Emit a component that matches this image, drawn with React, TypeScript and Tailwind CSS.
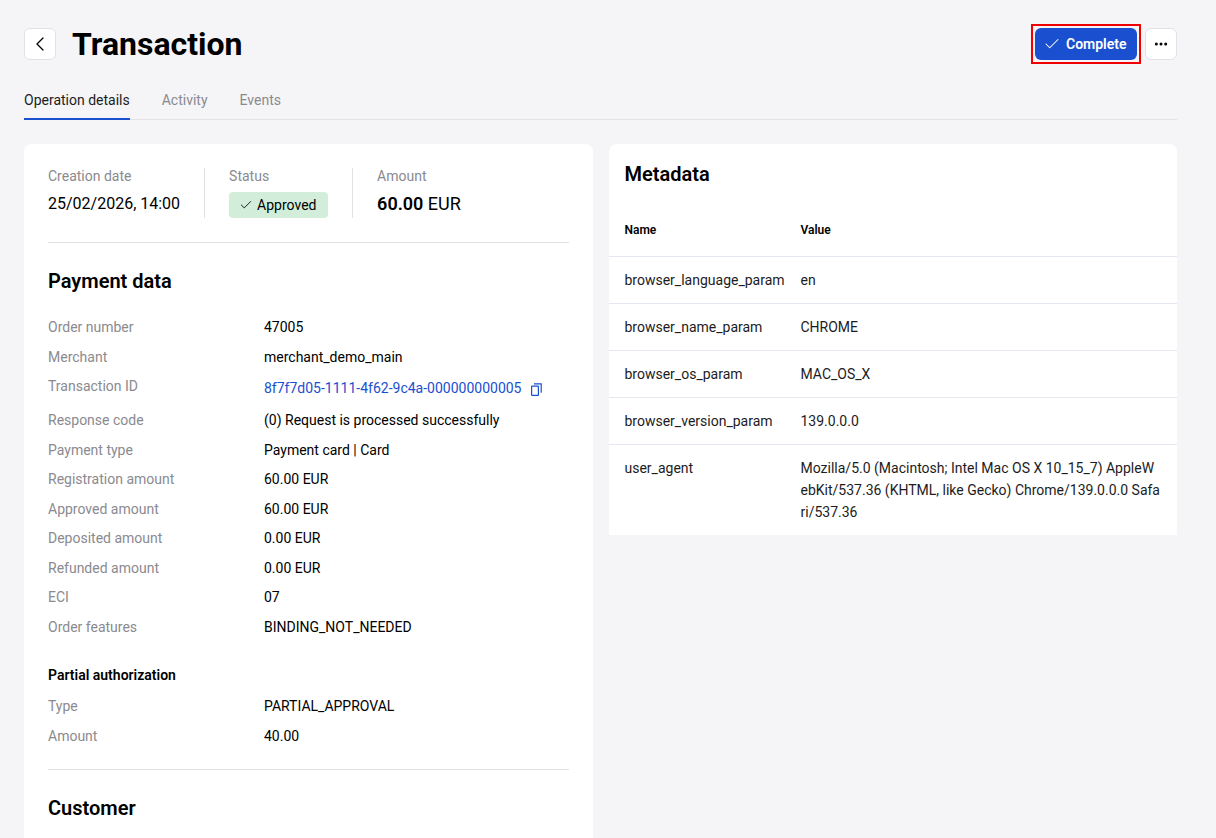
import { Check, ChevronLeft, MoreHorizontal } from 'lucide-react';

const paymentRows = [
  { label: 'Order number', value: '47005' },
  { label: 'Merchant', value: 'merchant_demo_main' },
  { label: 'Transaction ID', value: '8f7f7d05-1111-4f62-9c4a-000000000005', copy: true },
  { label: 'Response code', value: '(0) Request is processed successfully' },
  { label: 'Payment type', value: 'Payment card | Card' },
  { label: 'Registration amount', value: '60.00 EUR' },
  { label: 'Approved amount', value: '60.00 EUR' },
  { label: 'Deposited amount', value: '0.00 EUR' },
  { label: 'Refunded amount', value: '0.00 EUR' },
  { label: 'ECI', value: '07' },
  { label: 'Order features', value: 'BINDING_NOT_NEEDED' },
];

const partialRows = [
  { label: 'Type', value: 'PARTIAL_APPROVAL' },
  { label: 'Amount', value: '40.00' },
];

const metadata = [
  { name: 'browser_language_param', value: 'en' },
  { name: 'browser_name_param', value: 'CHROME' },
  { name: 'browser_os_param', value: 'MAC_OS_X' },
  { name: 'browser_version_param', value: '139.0.0.0' },
  {
    name: 'user_agent',
    value:
      'Mozilla/5.0 (Macintosh; Intel Mac OS X 10_15_7) AppleWebKit/537.36 (KHTML, like Gecko) Chrome/139.0.0.0 Safari/537.36',
  },
];

function CopyIcon() {
  return (
    <svg viewBox="0 0 11 13" className="h-[13px] w-[11px]" fill="none" stroke="currentColor" strokeWidth="1.2">
      <rect x="0.6" y="3.1" width="6.8" height="9.3" rx="0.5" />
      <path d="M3 0.8h7.2v9" />
    </svg>
  );
}

function DataRow({ label, value, copy }: { label: string; value: string; copy?: boolean }) {
  return (
    <div className="flex items-start">
      <div className="w-[216px] shrink-0 text-[14px] leading-[21.5px] text-[#8a8a8f]">{label}</div>
      {copy ? (
        <div className="flex h-[26px] items-center gap-[9px] text-[14px] leading-[21.5px] text-[#1a4fd0]">
          {value}
          <CopyIcon />
        </div>
      ) : (
        <div className="text-[14px] leading-[21.5px] text-black">{value}</div>
      )}
    </div>
  );
}

export default function App() {
  return (
    <div className="h-[838px] overflow-hidden bg-[#f5f5f7] pl-6 pr-[39px] pt-7 font-['Roboto',sans-serif] text-black">
      <div className="flex h-8 items-center justify-between">
        <div className="flex items-center gap-4">
          <button className="flex h-8 w-8 items-center justify-center rounded-md border border-[#e2e2e6] bg-white">
            <ChevronLeft className="h-6 w-6" strokeWidth={1.25} />
          </button>
          <h1 className="text-[32px] font-bold leading-8">Transaction</h1>
        </div>
        <div className="flex items-center gap-1">
          <div className="border-2 border-[#f00000] p-[2px]">
            <button className="flex h-8 w-[102px] items-center gap-[5px] rounded-md bg-[#1a4fd0] pl-2 text-[14px] font-semibold text-white">
              <Check className="h-[18px] w-[18px]" strokeWidth={1.4} />
              Complete
            </button>
          </div>
          <button className="flex h-8 w-8 items-center justify-center rounded-md border border-[#e2e2e6] bg-white">
            <MoreHorizontal className="h-4 w-4" strokeWidth={2.5} />
          </button>
        </div>
      </div>

      <div className="mt-[26px] flex h-[34px] gap-8 border-b border-[#e2e2e6] text-[14px] leading-[28px]">
        <div className="-mb-px border-b-2 border-[#1a4fd0] text-[#1c1c1e]">Operation details</div>
        <div className="text-[#8a8a8f]">Activity</div>
        <div className="text-[#8a8a8f]">Events</div>
      </div>

      <div className="mt-6 grid grid-cols-2 items-start gap-4">
        <div className="h-[800px] rounded-lg bg-white px-6 pt-6">
          <div className="flex border-b border-[#e2e2e6] pb-6">
            <div className="h-[50px] border-r border-[#e2e2e6] pr-6">
              <div className="text-[14px] leading-4 text-[#8a8a8f]">Creation date</div>
              <div className="mt-[10px] text-[16px] leading-5">25/02/2026, 14:00</div>
            </div>
            <div className="h-[50px] border-r border-[#e2e2e6] px-6">
              <div className="text-[14px] leading-4 text-[#8a8a8f]">Status</div>
              <div className="mt-2 flex h-[26px] w-[99px] items-center gap-1 rounded bg-[#d2eeda] pl-[10px] text-[14px]">
                <Check className="h-3.5 w-3.5" strokeWidth={1.5} />
                Approved
              </div>
            </div>
            <div className="px-6">
              <div className="text-[14px] leading-4 text-[#8a8a8f]">Amount</div>
              <div className="mt-[10px] text-[18px] leading-5">
                <span className="font-semibold">60.00</span> EUR
              </div>
            </div>
          </div>

          <h2 className="mt-[26px] text-[20px] font-semibold leading-6">Payment data</h2>
          <div className="mt-6 flex flex-col gap-2">
            {paymentRows.map((row) => (
              <DataRow key={row.label} {...row} />
            ))}
          </div>

          <h3 className="mt-[27px] text-[14px] font-semibold leading-5">Partial authorization</h3>
          <div className="mt-[11px] flex flex-col gap-2 border-b border-[#e2e2e6] pb-[22px]">
            {partialRows.map((row) => (
              <DataRow key={row.label} {...row} />
            ))}
          </div>

          <h2 className="mt-[26px] text-[20px] font-semibold leading-6">Customer</h2>
        </div>

        <div className="rounded-t-lg bg-white">
          <h2 className="px-4 pt-[18px] text-[20px] font-semibold leading-6">Metadata</h2>
          <div className="mt-[19px] flex h-[52px] items-center border-b border-[#e4e8f0] px-4 pb-[2px] text-[12px] font-semibold">
            <div className="w-[176px]">Name</div>
            <div>Value</div>
          </div>
          {metadata.map((row, i) => (
            <div
              key={row.name}
              className={`flex px-4 py-3 text-[14px] leading-[22px] ${
                i < metadata.length - 1 ? 'border-b border-[#e4e8f0]' : ''
              }`}
            >
              <div className="w-[176px] shrink-0 text-[#1c1c1e]">{row.name}</div>
              <div className="min-w-0 break-all text-[#1c1c1e]">{row.value}</div>
            </div>
          ))}
        </div>
      </div>
    </div>
  );
}
